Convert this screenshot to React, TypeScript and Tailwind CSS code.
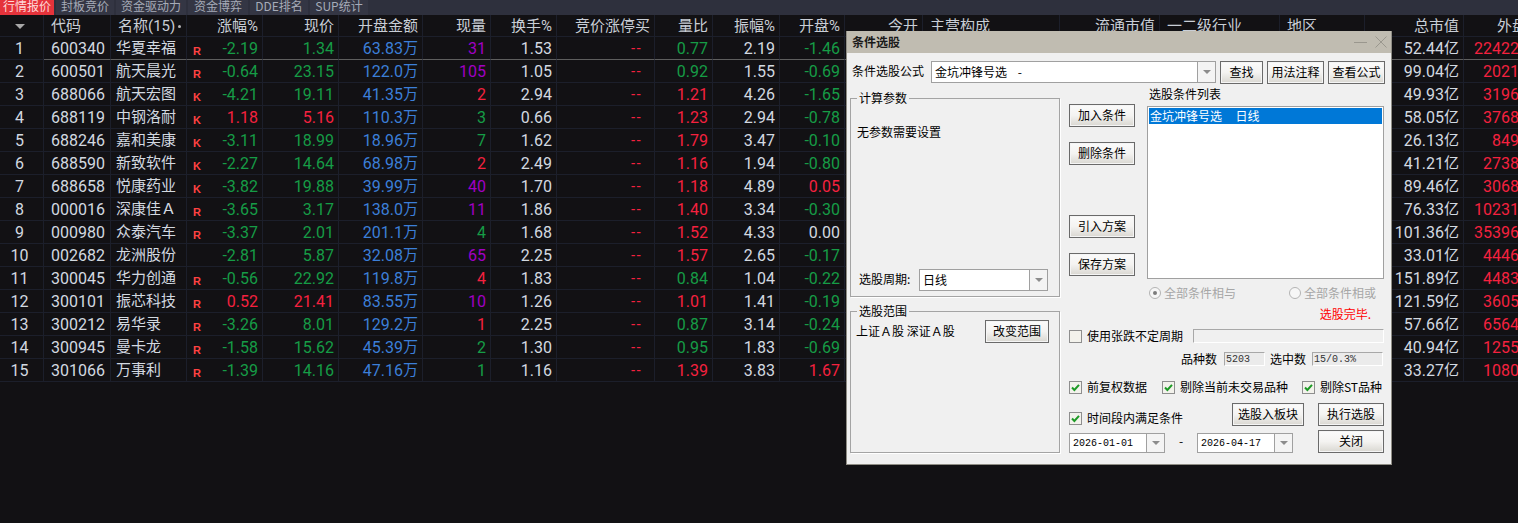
import React from 'react';

const GREEN = 'text-[#169c46]';
const RED = 'text-[#f5213f]';
const BLUE = 'text-[#3c7fd8]';
const PURPLE = 'text-[#a100c4]';
const WHITE = 'text-[#d3d9e0]';

const colsClass =
  'grid grid-cols-[44px_67px_76px_76px_76px_84px_68px_66px_98px_58px_67px_65px_78px_137px_100px_120px_85px_99px_65px]';

const tabs = ['行情报价', '封板竞价', '资金驱动力', '资金博弈', 'DDE排名', 'SUP统计'];

const headers = [
  '',
  '代码',
  '名称(15)',
  '涨幅%',
  '现价',
  '开盘金额',
  '现量',
  '换手%',
  '竞价涨停买',
  '量比',
  '振幅%',
  '开盘%',
  '今开',
  '主营构成',
  '流通市值',
  '一二级行业',
  '地区',
  '总市值',
  '外盘',
];

type Row = {
  code: string;
  name: string;
  tag: string;
  chg: string;
  price: string;
  amount: string;
  vol: string;
  volColor: string;
  turn: string;
  ratio: string;
  amp: string;
  open: string;
  cap: string;
  outer: string;
};

const rows: Row[] = [
  { code: '600340', name: '华夏幸福', tag: 'R', chg: '-2.19', price: '1.34', amount: '63.83', vol: '31', volColor: PURPLE, turn: '1.53', ratio: '0.77', amp: '2.19', open: '-1.46', cap: '52.44', outer: '224223' },
  { code: '600501', name: '航天晨光', tag: 'R', chg: '-0.64', price: '23.15', amount: '122.0', vol: '105', volColor: PURPLE, turn: '1.05', ratio: '0.92', amp: '1.55', open: '-0.69', cap: '99.04', outer: '20217' },
  { code: '688066', name: '航天宏图', tag: 'K', chg: '-4.21', price: '19.11', amount: '41.35', vol: '2', volColor: RED, turn: '2.94', ratio: '1.21', amp: '4.26', open: '-1.65', cap: '49.93', outer: '31960' },
  { code: '688119', name: '中钢洛耐', tag: 'K', chg: '1.18', price: '5.16', amount: '110.3', vol: '3', volColor: GREEN, turn: '0.66', ratio: '1.23', amp: '2.94', open: '-0.78', cap: '58.05', outer: '37685' },
  { code: '688246', name: '嘉和美康', tag: 'K', chg: '-3.11', price: '18.99', amount: '18.96', vol: '7', volColor: GREEN, turn: '1.62', ratio: '1.79', amp: '3.47', open: '-0.10', cap: '26.13', outer: '8494' },
  { code: '688590', name: '新致软件', tag: 'K', chg: '-2.27', price: '14.64', amount: '68.98', vol: '2', volColor: RED, turn: '2.49', ratio: '1.16', amp: '1.94', open: '-0.80', cap: '41.21', outer: '27381' },
  { code: '688658', name: '悦康药业', tag: 'K', chg: '-3.82', price: '19.88', amount: '39.99', vol: '40', volColor: PURPLE, turn: '1.70', ratio: '1.18', amp: '4.89', open: '0.05', cap: '89.46', outer: '30683' },
  { code: '000016', name: '深康佳Ａ', tag: 'R', chg: '-3.65', price: '3.17', amount: '138.0', vol: '11', volColor: PURPLE, turn: '1.86', ratio: '1.40', amp: '3.34', open: '-0.30', cap: '76.33', outer: '102314' },
  { code: '000980', name: '众泰汽车', tag: 'R', chg: '-3.37', price: '2.01', amount: '201.1', vol: '4', volColor: GREEN, turn: '1.68', ratio: '1.52', amp: '4.33', open: '0.00', cap: '101.36', outer: '353961' },
  { code: '002682', name: '龙洲股份', tag: '', chg: '-2.81', price: '5.87', amount: '32.08', vol: '65', volColor: PURPLE, turn: '2.25', ratio: '1.57', amp: '2.65', open: '-0.17', cap: '33.01', outer: '44460' },
  { code: '300045', name: '华力创通', tag: 'R', chg: '-0.56', price: '22.92', amount: '119.8', vol: '4', volColor: RED, turn: '1.83', ratio: '0.84', amp: '1.04', open: '-0.22', cap: '151.89', outer: '44832' },
  { code: '300101', name: '振芯科技', tag: 'R', chg: '0.52', price: '21.41', amount: '83.55', vol: '10', volColor: PURPLE, turn: '1.26', ratio: '1.01', amp: '1.41', open: '-0.19', cap: '121.59', outer: '36054' },
  { code: '300212', name: '易华录', tag: 'R', chg: '-3.26', price: '8.01', amount: '129.2', vol: '1', volColor: RED, turn: '2.25', ratio: '0.87', amp: '3.14', open: '-0.24', cap: '57.66', outer: '65647' },
  { code: '300945', name: '曼卡龙', tag: 'R', chg: '-1.58', price: '15.62', amount: '45.39', vol: '2', volColor: GREEN, turn: '1.30', ratio: '0.95', amp: '1.83', open: '-0.69', cap: '40.94', outer: '12551' },
  { code: '301066', name: '万事利', tag: 'R', chg: '-1.39', price: '14.16', amount: '47.16', vol: '1', volColor: GREEN, turn: '1.16', ratio: '1.39', amp: '3.83', open: '1.67', cap: '33.27', outer: '10805' },
];

function colorOf(v: string) {
  if (v.startsWith('-')) return GREEN;
  if (parseFloat(v) === 0) return WHITE;
  return RED;
}

function ratioColor(v: string) {
  return parseFloat(v) < 1 ? GREEN : RED;
}

function Cell({
  children,
  className = '',
  line = 'border-b-[#1c1f2b]',
}: {
  children?: React.ReactNode;
  className?: string;
  line?: string;
}) {
  return (
    <div
      className={`flex h-[23px] items-center overflow-hidden whitespace-nowrap border-r border-b border-r-[#1c1f2b] pt-[1px] ${line} ${className}`}
    >
      {children}
    </div>
  );
}

function Unit({ children }: { children: React.ReactNode }) {
  return <span className="text-[15px]">{children}</span>;
}

function QuoteRow({ row, index }: { row: Row; index: number }) {
  const line = index === 0 ? 'border-b-[#5e5e5e]' : 'border-b-[#1c1f2b]';
  const right = `justify-end pr-[4px] ${line}`;
  return (
    <div className={colsClass}>
      <Cell className={`justify-center pr-[4px] ${WHITE}`}>{index + 1}</Cell>
      <Cell line={line} className={`pl-[7px] ${WHITE}`}>{row.code}</Cell>
      <Cell line={line} className={`pl-[5px] text-[15px] ${WHITE}`}>
        <span className="mb-[1px]">{row.name}</span>
      </Cell>
      <Cell line={line} className="justify-between pr-[4px] pl-[6px]">
        <span className="mt-[5px] font-['Liberation_Sans',sans-serif] text-[11px] font-bold text-[#ff4242]">
          {row.tag}
        </span>
        <span className={colorOf(row.chg)}>{row.chg}</span>
      </Cell>
      <Cell line={line} className={`justify-end pr-[4px] ${colorOf(row.chg)}`}>{row.price}</Cell>
      <Cell line={line} className={`justify-end pr-[4px] ${BLUE}`}>
        {row.amount}
        <Unit>万</Unit>
      </Cell>
      <Cell className={`${right} ${row.volColor}`}>{row.vol}</Cell>
      <Cell className={`${right} ${WHITE}`}>{row.turn}</Cell>
      <Cell className={`justify-end pr-[12px] font-['Liberation_Sans',sans-serif] text-[14px] tracking-[1px] ${line} ${RED}`}>
        --
      </Cell>
      <Cell className={`${right} ${ratioColor(row.ratio)}`}>{row.ratio}</Cell>
      <Cell className={`${right} ${WHITE}`}>{row.amp}</Cell>
      <Cell className={`${right} ${colorOf(row.open)}`}>{row.open}</Cell>
      <Cell line={line} />
      <Cell line={line} />
      <Cell line={line} />
      <Cell line={line} />
      <Cell line={line} />
      <Cell className={`${right} ${WHITE}`}>
        {row.cap}
        <Unit>亿</Unit>
      </Cell>
      <Cell className={`justify-end ${line} ${RED}`}>{row.outer}</Cell>
    </div>
  );
}

function QuoteTable() {
  return (
    <div className="w-[1528px] font-['Roboto','Noto_Sans_CJK_SC',sans-serif] text-[16px]">
      <div className={colsClass}>
        {headers.map((h, i) => {
          const left = i === 1 || i === 2 || i === 13 || i === 15 || i === 16;
          return (
            <div
              key={i}
              className={`flex h-[22px] items-center overflow-hidden whitespace-nowrap border-r border-b border-[#1c1f2b] pt-[1px] text-[15px] text-[#c9ced6] ${
                i === 0 ? 'justify-center pr-[4px]' : left ? 'pl-[7px]' : i === 18 ? 'pl-[33px]' : 'justify-end pr-[4px]'
              }`}
            >
              {i === 0 && (
                <span className="h-0 w-0 border-x-[5px] border-t-[5px] border-x-transparent border-t-[#a8a8a8]" />
              )}
              {h}
              {i === 2 && <span className="ml-[3px] h-[3px] w-[3px] rounded-full bg-[#b8b8b8]" />}
            </div>
          );
        })}
      </div>
      {rows.map((row, i) => (
        <QuoteRow key={row.code} row={row} index={i} />
      ))}
    </div>
  );
}

function Btn({ children, className = '' }: { children: React.ReactNode; className?: string }) {
  return (
    <button
      type="button"
      className={`flex h-[23px] items-center justify-center border border-[#6a6a6a] bg-linear-to-b from-[#fbfbfb] via-[#f4f3f1] to-[#d9d7d1] pb-[1px] text-[12px] text-black shadow-[inset_0_0_0_1px_#f5f5f5] ${className}`}
    >
      {children}
    </button>
  );
}

function Arrow() {
  return (
    <span className="flex h-full w-[18px] shrink-0 items-center justify-center border-l border-[#a0a0a0] bg-[#f4f4f4]">
      <span className="h-0 w-0 border-x-[4px] border-t-[4px] border-x-transparent border-t-[#8c8c8c]" />
    </span>
  );
}

function Combo({ value, className = '', mono = false }: { value: string; className?: string; mono?: boolean }) {
  return (
    <div className={`flex items-center border border-[#a0a0a0] bg-white ${className}`}>
      <span
        className={`flex-1 truncate pl-[3px] whitespace-pre text-black ${
          mono ? "font-['Liberation_Mono',monospace] text-[10px]" : 'text-[12px]'
        }`}
      >
        {value}
      </span>
      <Arrow />
    </div>
  );
}

function Check({ checked, label }: { checked?: boolean; label: string }) {
  return (
    <div className="flex items-center gap-[5px] text-[12px] whitespace-nowrap text-black">
      <span className="flex h-[13px] w-[13px] shrink-0 items-center justify-center border border-[#8e8e8e] bg-[#f3f2ec]">
        {checked && (
          <svg width="9" height="9" viewBox="0 0 9 9">
            <path d="M1 4.5 L3.4 7 L8 1.8" fill="none" stroke="#1d9a26" strokeWidth="2" />
          </svg>
        )}
      </span>
      {label}
    </div>
  );
}

function Radio({ checked, label, className = '' }: { checked?: boolean; label: string; className?: string }) {
  return (
    <div className={`flex items-center gap-[3px] text-[12px] whitespace-nowrap text-[#a6a6a6] ${className}`}>
      <span className="flex h-[12px] w-[12px] items-center justify-center rounded-full border border-[#b4b4b4] bg-[#f6f6f6]">
        {checked && <span className="h-[4px] w-[4px] rounded-full bg-[#7c7c7c]" />}
      </span>
      {label}
    </div>
  );
}

function Group({
  title,
  className = '',
  children,
}: {
  title: string;
  className?: string;
  children: React.ReactNode;
}) {
  return (
    <fieldset className={`border border-[#a4a4a4] shadow-[1px_1px_0_#fff] ${className}`}>
      <legend className="ml-[6px] px-[2px] text-[12px] leading-[12px] text-black">{title}</legend>
      {children}
    </fieldset>
  );
}

function Inset({ children, className = '' }: { children?: React.ReactNode; className?: string }) {
  return (
    <div
      className={`flex h-[14px] items-center border border-[#a8a8a8] border-r-white border-b-white bg-[#ebebeb] pl-[1px] font-['Liberation_Mono',monospace] text-[10px] text-[#333] ${className}`}
    >
      {children}
    </div>
  );
}

function ConditionDialog() {
  return (
    <div className="absolute top-[31px] left-[846px] flex h-[434px] w-[546px] flex-col border-r border-b border-l border-[#8f8d85] bg-[#f0f0f0] font-['Noto_Sans_CJK_SC',sans-serif] text-[12px] text-black">
      <div className="flex h-[22px] shrink-0 items-center justify-between bg-[#c0bcb1] pr-[3px] pl-[5px]">
        <span className="text-[12px] font-bold text-[#1a1a1a]">条件选股</span>
        <div className="flex items-center gap-[7px]">
          <span className="h-px w-[13px] bg-[#9a978e]" />
          <svg width="14" height="14" viewBox="0 0 14 14">
            <path d="M1.5 1.5 L12.5 12.5 M12.5 1.5 L1.5 12.5" stroke="#9a978e" strokeWidth="1" />
          </svg>
        </div>
      </div>

      <div className="mt-[8px] flex h-[23px] items-start pl-[5px]">
        <span className="w-[79px] leading-[20px] whitespace-nowrap">条件选股公式</span>
        <Combo value="金坑冲锋号选    -" className="h-[22px] w-[285px]" />
        <Btn className="ml-[4px] w-[43px]">查找</Btn>
        <Btn className="ml-[4px] w-[57px]">用法注释</Btn>
        <Btn className="ml-[4px] w-[57px]">查看公式</Btn>
      </div>

      <div className="mt-[8px] flex pl-[3px]">
        <div className="flex w-[210px] flex-col gap-[8px]">
          <Group title="计算参数" className="h-[205px]">
            <div className="mt-[19px] pl-[6px]">无参数需要设置</div>
            <div className="mt-[128px] flex items-center pl-[8px]">
              <span className="w-[60px] pb-[2px] whitespace-nowrap">选股周期:</span>
              <Combo value="日线" className="h-[22px] w-[129px]" />
            </div>
          </Group>
          <Group title="选股范围" className="h-[148px]">
            <div className="mt-[3px] flex items-center justify-between pr-[10px] pl-[5px]">
              <span className="pb-[2px] whitespace-nowrap">上证Ａ股 深证Ａ股</span>
              <Btn className="w-[64px]">改变范围</Btn>
            </div>
          </Group>
        </div>

        <div className="ml-[9px] flex w-[315px] flex-col pt-[2px]">
          <div className="flex">
            <div className="flex w-[66px] flex-col pt-[10px]">
              <Btn className="w-full">加入条件</Btn>
              <Btn className="mt-[15px] w-full">删除条件</Btn>
              <Btn className="mt-[50px] w-full">引入方案</Btn>
              <Btn className="mt-[15px] w-full">保存方案</Btn>
            </div>
            <div className="ml-[12px] flex w-[237px] flex-col">
              <span className="-mt-[6px] mb-[6px] ml-[2px] h-[12px] text-[12px] leading-[12px]">选股条件列表</span>
              <div className="h-[173px] border border-[#a0a0a0] bg-white p-px">
                <div className="flex h-[16px] items-center bg-[#0078d7] pb-[1px] pl-[1px] text-[12px] whitespace-pre text-white">
                  金坑冲锋号选     日线
                </div>
              </div>
            </div>
          </div>

          <div className="mt-[8px] flex h-[12px] items-center pl-[80px]">
            <Radio checked label="全部条件相与" />
            <Radio label="全部条件相或" className="ml-[53px]" />
          </div>

          <div className="mt-[9px] h-[12px] pr-[13px] text-right text-[12px] leading-[12px] text-[#f00]">选股完毕.</div>

          <div className="mt-[9px] flex h-[14px] items-center">
            <Check label="使用张跌不定周期" />
            <div className="ml-auto h-[14px] w-[191px] border border-[#a8a8a8] border-r-white border-b-white" />
          </div>

          <div className="mt-[9px] flex h-[14px] items-center">
            <span className="ml-[112px] whitespace-nowrap">品种数</span>
            <Inset className="ml-[7px] w-[41px]">5203</Inset>
            <span className="ml-[5px] whitespace-nowrap">选中数</span>
            <Inset className="ml-[6px] w-[71px]">15/0.3%</Inset>
          </div>

          <div className="mt-[14px] flex h-[14px] items-center">
            <Check checked label="前复权数据" />
            <div className="ml-[15px]">
              <Check checked label="剔除当前未交易品种" />
            </div>
            <div className="mr-[2px] ml-auto">
              <Check checked label="剔除ST品种" />
            </div>
          </div>

          <div className="mt-[9px] flex h-[23px] items-start">
            <div className="mt-[6px]">
              <Check checked label="时间段内满足条件" />
            </div>
            <Btn className="ml-auto w-[72px]">选股入板块</Btn>
            <Btn className="ml-[14px] w-[66px]">执行选股</Btn>
          </div>

          <div className="mt-[4px] flex h-[23px] items-start">
            <Combo value="2026-01-01" mono className="mt-[3px] h-[20px] w-[96px]" />
            <span className="mt-[2px] w-[32px] text-center">-</span>
            <Combo value="2026-04-17" mono className="mt-[3px] h-[20px] w-[96px]" />
            <Btn className="ml-auto w-[66px]">关闭</Btn>
          </div>
        </div>
      </div>
    </div>
  );
}

export default function App() {
  return (
    <div className="relative h-[523px] w-[1518px] overflow-hidden bg-[#121114]">
      <div className="flex h-[15px] gap-[2px] overflow-hidden bg-[#2e303d] font-['Noto_Sans_CJK_SC',sans-serif]">
        {tabs.map((t, i) => (
          <div
            key={t}
            className={`flex h-[15px] items-start justify-center text-[12px] leading-[11px] whitespace-nowrap ${
              i === 0 ? 'w-[54px] bg-[#e5333b] text-[#ffd9d9]' : 'w-[58px] bg-[#343644] text-[#a6abb8]'
            } ${i === 2 ? 'w-[70px]' : ''} ${i === 3 ? 'w-[60px]' : ''}`}
          >
            {t}
          </div>
        ))}
      </div>
      <QuoteTable />
      <ConditionDialog />
    </div>
  );
}
